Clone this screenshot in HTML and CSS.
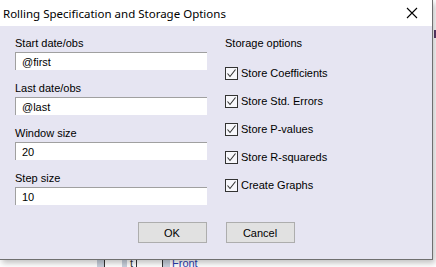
FILE: index.html
```html
<!DOCTYPE html>
<html lang="en">
<head>
    <meta charset="UTF-8">
    <title>Rolling Specification and Storage Options</title>
    <link rel="stylesheet" href="styles.css">
</head>
<body>
    <div class="screen">
        <div class="dialog">
            <div class="titlebar">
                <span class="title">Rolling Specification and Storage Options</span>
                <svg class="close" width="12" height="12" viewBox="0 0 12 12">
                    <path d="M1 1 L11 11 M11 1 L1 11" stroke="#000" stroke-width="1.1" fill="none"/>
                </svg>
            </div>

            <div class="body">
                <div class="columns">
                    <div class="fields">
                        <div class="field">
                            <label>Start date/obs</label>
                            <input class="edit" type="text" value="@first">
                        </div>
                        <div class="field">
                            <label>Last date/obs</label>
                            <input class="edit" type="text" value="@last">
                        </div>
                        <div class="field">
                            <label>Window size</label>
                            <input class="edit" type="text" value="20">
                        </div>
                        <div class="field">
                            <label>Step size</label>
                            <input class="edit" type="text" value="10">
                        </div>
                    </div>

                    <div class="storage">
                        <div class="group-title">Storage options</div>
                        <div class="check"><span class="box"><svg width="11" height="11" viewBox="0 0 11 11"><path d="M1.5 5.5 L4 8.5 L9.5 1.5" stroke="#333" stroke-width="1.1" fill="none"/></svg></span>Store Coefficients</div>
                        <div class="check"><span class="box"><svg width="11" height="11" viewBox="0 0 11 11"><path d="M1.5 5.5 L4 8.5 L9.5 1.5" stroke="#333" stroke-width="1.1" fill="none"/></svg></span>Store Std. Errors</div>
                        <div class="check"><span class="box"><svg width="11" height="11" viewBox="0 0 11 11"><path d="M1.5 5.5 L4 8.5 L9.5 1.5" stroke="#333" stroke-width="1.1" fill="none"/></svg></span>Store P-values</div>
                        <div class="check"><span class="box"><svg width="11" height="11" viewBox="0 0 11 11"><path d="M1.5 5.5 L4 8.5 L9.5 1.5" stroke="#333" stroke-width="1.1" fill="none"/></svg></span>Store R-squareds</div>
                        <div class="check"><span class="box"><svg width="11" height="11" viewBox="0 0 11 11"><path d="M1.5 5.5 L4 8.5 L9.5 1.5" stroke="#333" stroke-width="1.1" fill="none"/></svg></span>Create Graphs</div>
                    </div>
                </div>

                <div class="buttons">
                    <button class="btn">OK</button>
                    <button class="btn">Cancel</button>
                </div>
            </div>
        </div>

        <div class="side-strip">
            <span class="side-mark"></span>
        </div>

        <div class="bottom-strip">
            <span class="cell blank"></span>
            <span class="cell tint"></span>
            <span class="cell line-l w18"></span>
            <span class="cell tint w5"></span>
            <span class="cell glyph">t</span>
            <span class="cell line-l w26"></span>
            <span class="cell line-l tint w8"></span>
            <span class="cell blue">Front</span>
        </div>
    </div>
</body>
</html>
```

FILE: styles.css
```css
* {
    margin: 0;
    padding: 0;
    box-sizing: border-box;
}

body {
    width: 436px;
    height: 267px;
    overflow: hidden;
    background: #fff;
    font-family: "Liberation Sans", Arial, sans-serif;
    font-size: 11px;
    color: #000;
}

.screen {
    display: grid;
    grid-template-columns: 433px 3px;
    grid-template-rows: 260px 7px;
}

/* dialog window */
.dialog {
    position: relative;
    z-index: 2;
    display: flex;
    flex-direction: column;
    border-right: 1px solid #6f6f6f;
    border-bottom: 1px solid #6f6f6f;
    box-shadow: 2px 3px 6px rgba(0,0,0,0.25);
}

.titlebar {
    height: 26px;
    background: #fff;
    display: flex;
    align-items: center;
    justify-content: space-between;
    padding: 0 14px 0 3px;
}

.title {
    font-family: "Noto Sans", sans-serif;
    font-size: 11.5px;
}

.body {
    flex: 1;
    background: #e6e5f2;
    display: flex;
    flex-direction: column;
    padding: 10px 0 0 15px;
}

.columns {
    display: flex;
    gap: 18px;
}

.fields {
    width: 192px;
    display: flex;
    flex-direction: column;
    gap: 11px;
}

.field label {
    display: block;
    height: 14px;
    line-height: 14px;
    margin-bottom: 2px;
}

.edit {
    display: block;
    width: 192px;
    height: 18px;
    border: none;
    border-top: 1px solid #a0a0a0;
    border-left: 1px solid #a0a0a0;
    background: #fff;
    font-family: "Liberation Sans", Arial, sans-serif;
    font-size: 11px;
    padding: 0 0 0 6px;
    outline: none;
}

.storage {
    display: flex;
    flex-direction: column;
}

.group-title {
    height: 14px;
    line-height: 14px;
    margin-bottom: 9px;
}

.check {
    display: flex;
    align-items: center;
    height: 28px;
    gap: 3px;
}

.box {
    width: 13px;
    height: 13px;
    border: 1px solid #333;
    background: #f7f7fb;
    display: flex;
    align-items: center;
    justify-content: center;
}

.buttons {
    display: flex;
    justify-content: center;
    gap: 19px;
    margin: 17px 0 0 -15px;
}

.btn {
    width: 69px;
    height: 21px;
    background: #e1e1e1;
    border: 1px solid #adadad;
    font-family: "Liberation Sans", Arial, sans-serif;
    font-size: 11px;
    color: #000;
}

/* windows behind the dialog */
.side-strip {
    background: #fff;
    position: relative;
}

.side-mark {
    display: block;
    width: 2px;
    height: 8px;
    margin: 30px 0 0 1px;
    background: #5a3a6a;
}

.bottom-strip {
    grid-column: 1 / 3;
    display: flex;
    background: #fff;
    overflow: hidden;
    font-size: 11px;
    line-height: 7px;
}

.cell {
    height: 7px;
}

.blank { width: 97px; }
.tint { width: 7px; background: #c8d0dc; }
.w5 { width: 5px; }
.w8 { width: 8px; }
.w18 { width: 18px; }
.w26 { width: 26px; }
.line-l { border-left: 1px solid #333; }
.glyph { width: 9px; padding-left: 3px; color: #333; }
.blue { padding-left: 2px; color: #2a3cb0; }
```
